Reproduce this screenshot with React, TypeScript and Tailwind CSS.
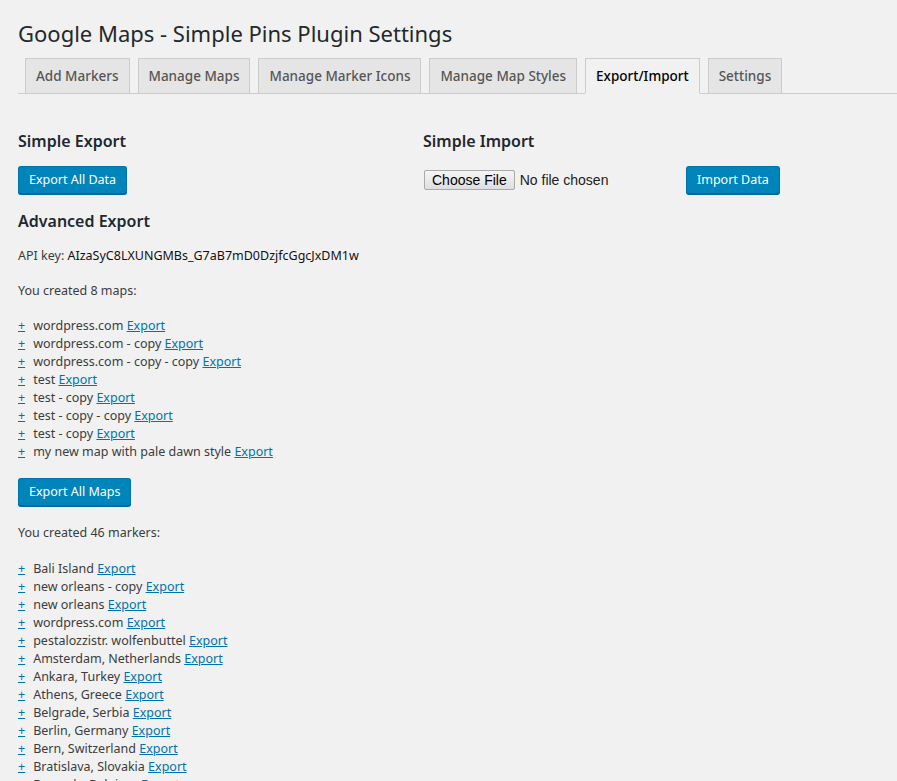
const maps = [
  'wordpress.com',
  'wordpress.com - copy',
  'wordpress.com - copy - copy',
  'test',
  'test - copy',
  'test - copy - copy',
  'test - copy',
  'my new map with pale dawn style',
];

const markers = [
  'Bali Island',
  'new orleans - copy',
  'new orleans',
  'wordpress.com',
  'pestalozzistr. wolfenbuttel',
  'Amsterdam, Netherlands',
  'Ankara, Turkey',
  'Athens, Greece',
  'Belgrade, Serbia',
  'Berlin, Germany',
  'Bern, Switzerland',
  'Bratislava, Slovakia',
  'Brussels, Belgium',
  'Bucharest, Romania',
  'Budapest, Hungary',
];

const tabs = [
  'Add Markers',
  'Manage Maps',
  'Manage Marker Icons',
  'Manage Map Styles',
  'Export/Import',
  'Settings',
];

function PrimaryButton({ children }: { children: React.ReactNode }) {
  return (
    <button className="h-[28px] px-[10px] rounded-[3px] border border-[#0073aa] border-b-[#006799] bg-[#0085ba] text-white text-[12.5px] leading-[26px] shadow-[0_1px_0_#006799] whitespace-nowrap">
      {children}
    </button>
  );
}

function ItemList({ items }: { items: string[] }) {
  return (
    <ul>
      {items.map((name, i) => (
        <li key={i} className="leading-[18px] whitespace-nowrap">
          <a href="#" className="text-[#0073aa] underline">+</a>
          <span className="ml-[8px]">{name}</span>{' '}
          <a href="#" className="text-[#0073aa] underline">Export</a>
        </li>
      ))}
    </ul>
  );
}

export default function App() {
  return (
    <div
      className="min-h-screen bg-[#f1f1f1] text-[#3c3c3c] text-[12.5px] pl-[18px]"
      style={{ fontFamily: '"Noto Sans", "Open Sans", sans-serif' }}
    >
      <h1 className="pt-[18px] text-[22px] leading-[30px] text-[#23282d]">
        Google Maps - Simple Pins Plugin Settings
      </h1>

      {/* Tabs */}
      <div className="mt-[10px] flex items-end border-b border-[#ccc] pl-[7px] gap-[8px]">
        {tabs.map((t) => {
          const active = t === 'Export/Import';
          return (
            <a
              key={t}
              href="#"
              className={
                active
                  ? '-mb-px px-[10px] py-[5px] border border-[#ccc] border-b-[#f1f1f1] bg-[#f1f1f1] text-[13.5px] leading-[24px] font-medium text-black whitespace-nowrap'
                  : '-mb-px px-[10px] py-[5px] border border-[#ccc] bg-[#e5e5e5] text-[13.5px] leading-[24px] font-medium text-[#555] whitespace-nowrap'
              }
            >
              {t}
            </a>
          );
        })}
      </div>

      <div className="grid grid-cols-[405px_1fr]">
        {/* Export */}
        <div>
          <h2 className="mt-[36px] text-[16px] leading-[22px] font-semibold text-[#23282d]">
            Simple Export
          </h2>
          <div className="mt-[14px]">
            <PrimaryButton>Export All Data</PrimaryButton>
          </div>

          <h2 className="mt-[16px] text-[16px] leading-[22px] font-semibold text-[#23282d]">
            Advanced Export
          </h2>
          <p className="mt-[15px] leading-[18px]">
            API key: <span className="text-[#111]">AIzaSyC8LXUNGMBs_G7aB7mD0DzjfcGgcJxDM1w</span>
          </p>

          <p className="mt-[17px] leading-[18px]">You created 8 maps:</p>
          <div className="mt-[17px]">
            <ItemList items={maps} />
          </div>
          <div className="mt-[17px]">
            <PrimaryButton>Export All Maps</PrimaryButton>
          </div>

          <p className="mt-[18px] leading-[18px]">You created 46 markers:</p>
          <div className="mt-[18px]">
            <ItemList items={markers} />
          </div>
        </div>

        {/* Import */}
        <div>
          <h2 className="mt-[36px] text-[16px] leading-[22px] font-semibold text-[#23282d]">
            Simple Import
          </h2>
          <div className="mt-[14px] flex items-center h-[28px]">
            <div className="w-[263px] flex items-center">
              <span
                className="ml-px h-[20px] px-[7px] border border-[#a9a9a9] rounded-[2px] bg-gradient-to-b from-[#f6f6f6] to-[#dedede] text-[14px] leading-[18px] text-black"
                style={{ fontFamily: '"Liberation Sans", Arial, sans-serif' }}
              >
                Choose File
              </span>
              <span
                className="ml-[5px] text-[14px] text-[#222]"
                style={{ fontFamily: '"Liberation Sans", Arial, sans-serif' }}
              >
                No file chosen
              </span>
            </div>
            <PrimaryButton>Import Data</PrimaryButton>
          </div>
        </div>
      </div>
    </div>
  );
}
